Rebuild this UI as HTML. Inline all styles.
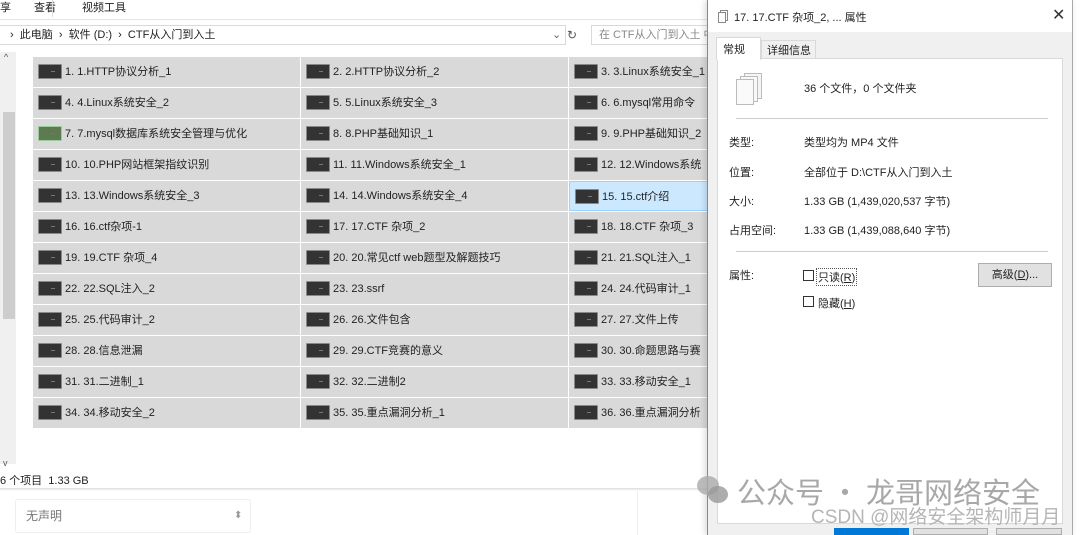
<!DOCTYPE html>
<html><head><meta charset="utf-8"><style>
*{margin:0;padding:0;box-sizing:border-box}
body{width:1080px;height:535px;overflow:hidden;background:#fff;font-family:"Liberation Sans","Noto Sans CJK SC",sans-serif;font-size:11px;color:#222;position:relative}
.a{position:absolute;white-space:nowrap}
.cell{position:absolute;height:30px;background:#d9d9d9;font-size:11px;line-height:30px;padding-left:32px}
.cell i{position:absolute;left:5px;top:7px;width:24px;height:15px;background:#333;border:1px solid #888;border-radius:1px}
.cell i:after{content:"";position:absolute;left:12px;top:6px;width:4px;height:1px;background:#777}
.sel{background:#cce8ff;border:1px solid #99d1ff}
</style></head><body>
<div class="a" style="left:0;top:0;width:708px;height:18px;background:#fff;font-size:11px;line-height:16px">
<span class="a" style="left:0">享</span><span class="a" style="left:34px">查看</span><span class="a" style="left:52px;top:0;width:1px;height:17px;background:#ddd"></span><span class="a" style="left:82px">视频工具</span></div>
<div class="a" style="left:0;top:19px;width:708px;height:1px;background:#e5e5e5"></div>
<div class="a" style="left:0;top:25px;width:566px;height:20px;border:1px solid #d9d9d9;border-left:none;font-size:11px;line-height:18px;padding-left:10px">› &nbsp;此电脑 &nbsp;› &nbsp;软件 (D:) &nbsp;› &nbsp;CTF从入门到入土<span class="a" style="left:552px;color:#666">⌄</span></div>
<div class="a" style="left:567px;top:25px;font-size:12px;color:#555;line-height:20px">↻</div>
<div class="a" style="left:591px;top:25px;width:117px;height:20px;border:1px solid #d9d9d9;border-right:none;color:#888;line-height:18px;padding-left:7px">在 CTF从入门到入土 中</div>
<div class="a" style="left:0;top:52px;width:16px;height:412px;background:#f0f0f0"></div>
<div class="a" style="left:4px;top:52px;font-size:9px;color:#555">^</div>
<div class="a" style="left:3px;top:112px;width:12px;height:207px;background:#cdcdcd"></div>
<div class="a" style="left:3px;top:458px;font-size:9px;color:#555">v</div>
<div class="a" style="left:0;top:472px;font-size:11px">6 个项目 &nbsp;1.33 GB</div>
<div class="a" style="left:0;top:488px;width:708px;height:3px;background:linear-gradient(#ddd,#fff)"></div>
<div id="g"></div>
<div class="a" style="left:15px;top:499px;width:236px;height:34px;border:1px solid #eee;border-radius:3px;color:#777;font-size:12px;line-height:32px;padding-left:10px">无声明<span class="a" style="left:218px;font-size:10px;color:#999">⬍</span></div>
<div class="a" style="left:637px;top:491px;width:1px;height:44px;background:#eee"></div>
<div class="a" style="left:707px;top:0;width:366px;height:535px;background:#f0f0f0;border-left:1px solid #888;border-right:1px solid #aaa;box-shadow:-2px 0 6px rgba(0,0,0,.15)">
<div class="a" style="left:0;top:0;width:364px;height:32px;background:#fff"></div>
<div class="a" style="left:12px;top:10px;width:8px;height:11px;border:1px solid #888;background:#fff"></div>
<div class="a" style="left:10px;top:12px;width:8px;height:11px;border:1px solid #888;background:#fff"></div>
<div class="a" style="left:26px;top:9px;font-size:11px">17. 17.CTF 杂项_2, ... 属性</div>
<div class="a" style="left:344px;top:5px;font-size:16px;color:#333">✕</div>
<div class="a" style="left:9px;top:58px;width:346px;height:466px;background:#fff;border:1px solid #d9d9d9"></div>
<div class="a" style="left:8px;top:37px;width:45px;height:23px;background:#fff;border:1px solid #d9d9d9;border-bottom:none;font-size:11px;padding:3px 0 0 6px">常规</div>
<div class="a" style="left:53px;top:40px;width:55px;height:18px;background:#f0f0f0;border:1px solid #d9d9d9;border-bottom:none;font-size:11px;padding:1px 0 0 5px">详细信息</div>
<div class="a" style="left:36px;top:73px;width:18px;height:26px;background:#f5f5f5;border:1px solid #bbb"></div>
<div class="a" style="left:32px;top:76px;width:18px;height:26px;background:#f8f8f8;border:1px solid #bbb"></div>
<div class="a" style="left:28px;top:79px;width:18px;height:26px;background:#fafafa;border:1px solid #bbb"></div>
<div class="a" style="left:96px;top:80px">36 个文件，0 个文件夹</div>
<div class="a" style="left:28px;top:118px;width:312px;height:1px;background:#ccc"></div>
<div class="a" style="left:21px;top:134px">类型:</div><div class="a" style="left:96px;top:134px">类型均为 MP4 文件</div>
<div class="a" style="left:21px;top:164px">位置:</div><div class="a" style="left:96px;top:164px">全部位于 D:\CTF从入门到入土</div>
<div class="a" style="left:21px;top:193px">大小:</div><div class="a" style="left:96px;top:193px">1.33 GB (1,439,020,537 字节)</div>
<div class="a" style="left:21px;top:222px">占用空间:</div><div class="a" style="left:96px;top:222px">1.33 GB (1,439,088,640 字节)</div>
<div class="a" style="left:28px;top:251px;width:312px;height:1px;background:#ccc"></div>
<div class="a" style="left:21px;top:267px">属性:</div>
<div class="a" style="left:95px;top:270px;width:11px;height:11px;border:1px solid #333;background:#fff"></div>
<div class="a" style="left:108px;top:268px;border:1px dotted #555;padding:0 1px">只读(<u>R</u>)</div>
<div class="a" style="left:95px;top:296px;width:11px;height:11px;border:1px solid #333;background:#fff"></div>
<div class="a" style="left:110px;top:295px">隐藏(<u>H</u>)</div>
<div class="a" style="left:270px;top:263px;width:74px;height:24px;background:#e1e1e1;border:1px solid #adadad;text-align:center;line-height:22px">高级(<u>D</u>)...</div>
<div class="a" style="left:126px;top:528px;width:75px;height:7px;background:#0078d7"></div>
<div class="a" style="left:205px;top:528px;width:75px;height:7px;background:#e1e1e1;border:1px solid #adadad"></div>
<div class="a" style="left:288px;top:528px;width:66px;height:7px;background:#e1e1e1;border:1px solid #adadad"></div>
</div>
<div class="a" style="left:697px;top:476px;width:22px;height:19px;background:#aaa;border-radius:50%;opacity:.8"></div>
<div class="a" style="left:708px;top:486px;width:20px;height:17px;background:#999;border-radius:50%;opacity:.8"></div>
<div class="a" style="left:737px;top:471px;font-size:29px;color:#a8a8a8;font-family:'Noto Sans CJK SC',sans-serif;line-height:40px">公众号 · 龙哥网络安全</div>
<div class="a" style="left:811px;top:505px;font-size:19px;color:#b5b5b5;font-family:'Liberation Sans','Noto Sans CJK SC',sans-serif;line-height:26px">CSDN @网络安全架构师月月</div>
<script>
var n=["1. 1.HTTP协议分析_1","2. 2.HTTP协议分析_2","3. 3.Linux系统安全_1","4. 4.Linux系统安全_2","5. 5.Linux系统安全_3","6. 6.mysql常用命令","7. 7.mysql数据库系统安全管理与优化","8. 8.PHP基础知识_1","9. 9.PHP基础知识_2","10. 10.PHP网站框架指纹识别","11. 11.Windows系统安全_1","12. 12.Windows系统安全_2","13. 13.Windows系统安全_3","14. 14.Windows系统安全_4","15. 15.ctf介绍","16. 16.ctf杂项-1","17. 17.CTF 杂项_2","18. 18.CTF 杂项_3","19. 19.CTF 杂项_4","20. 20.常见ctf web题型及解题技巧","21. 21.SQL注入_1","22. 22.SQL注入_2","23. 23.ssrf","24. 24.代码审计_1","25. 25.代码审计_2","26. 26.文件包含","27. 27.文件上传","28. 28.信息泄漏","29. 29.CTF竞赛的意义","30. 30.命题思路与赛题设计","31. 31.二进制_1","32. 32.二进制2","33. 33.移动安全_1","34. 34.移动安全_2","35. 35.重点漏洞分析_1","36. 36.重点漏洞分析_2"];
var h="",xs=[33,301,569],ws=[267,267,139];
for(var i=0;i<36;i++){var r=Math.floor(i/3),c=i%3;
h+='<div class="cell'+(i==14?' sel':'')+'" style="left:'+xs[c]+'px;top:'+(57+r*31)+'px;width:'+ws[c]+'px;overflow:hidden"><i'+(i==6?' style="background:#5d7a50;border-color:#9c9"':'')+'></i>'+n[i]+'</div>';}
document.getElementById("g").innerHTML=h;
</script>
</body></html>
